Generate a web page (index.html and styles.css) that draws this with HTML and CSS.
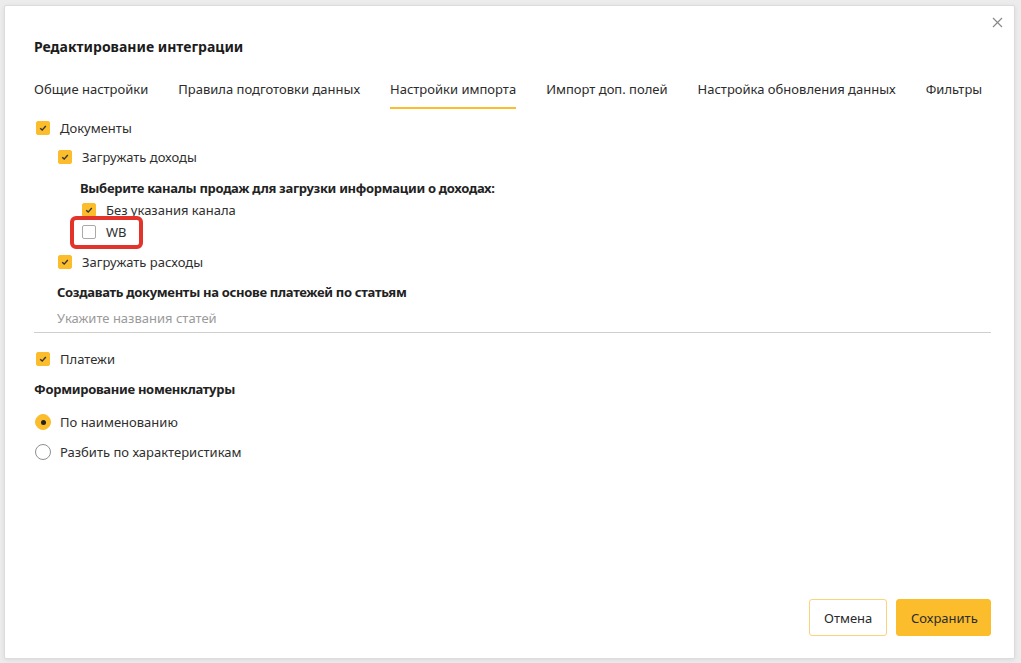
FILE: index.html
```html
<!DOCTYPE html>
<html lang="ru">
<head>
    <meta charset="UTF-8">
    <meta name="viewport" content="width=device-width, initial-scale=1.0">
    <title>Редактирование интеграции</title>
    <link rel="stylesheet" href="styles.css">
</head>
<body>
    <div class="modal">
        <button class="closeBtn" type="button" aria-label="Закрыть">
            <svg width="11" height="11" viewBox="0 0 11 11"><path d="M1 1L10 10M10 1L1 10" stroke="#8a8a8a" stroke-width="1.2" fill="none"/></svg>
        </button>

        <h1 class="title">Редактирование интеграции</h1>

        <ul class="tabs">
            <li>Общие настройки</li>
            <li>Правила подготовки данных</li>
            <li class="active">Настройки импорта</li>
            <li>Импорт доп. полей</li>
            <li>Настройка обновления данных</li>
            <li>Фильтры</li>
        </ul>

        <div class="content">
            <label class="opt lvl0 first"><span class="box on"></span>Документы</label>
            <label class="opt lvl1 gap7"><span class="box on"></span>Загружать доходы</label>

            <div class="caption lvl2 gap9">Выберите каналы продаж для загрузки информации о доходах:</div>
            <label class="opt lvl2b"><span class="box on"></span>Без указания канала</label>
            <label class="opt lvl2b"><span class="mark"><span class="box"></span>WB</span></label>

            <label class="opt lvl1 gap8"><span class="box on"></span>Загружать расходы</label>

            <div class="caption lvl1t gap8">Создавать документы на основе платежей по статьям</div>
            <div class="field lvl1t">Укажите названия статей</div>

            <label class="opt lvl0 gap15"><span class="box on"></span>Платежи</label>

            <div class="caption gap8">Формирование номенклатуры</div>
            <label class="opt radioRow gap11"><span class="radio on"></span>По наименованию</label>
            <label class="opt radioRow gap8"><span class="radio"></span>Разбить по характеристикам</label>
        </div>

        <div class="footer">
            <button class="btn btnCancel" type="button">Отмена</button>
            <button class="btn btnSave" type="button">Сохранить</button>
        </div>
    </div>
</body>
</html>
```

FILE: styles.css
```css
* {
    box-sizing: border-box;
}
body {
    margin: 0;
    padding: 5px 6px 4px 4px;
    height: 663px;
    overflow: hidden;
    background-color: #ececec;
    font-family: "Noto Sans", "Open Sans", sans-serif;
    font-size: 13px;
    color: #2f2f2f;
}
.modal {
    position: relative;
    height: 654px;
    display: flex;
    flex-direction: column;
    padding: 0 23px 22px 29px;
    background-color: #fff;
    border: 1px solid #dcdcdc;
    border-radius: 2px;
    box-shadow: 0 1px 4px rgba(0, 0, 0, .08);
}
.closeBtn {
    position: absolute;
    top: 11px;
    right: 11px;
    width: 11px;
    height: 11px;
    padding: 0;
    border: 0;
    background: none;
    cursor: pointer;
}
.closeBtn svg {
    display: block;
}
.title {
    margin: 31px 0 0;
    font-size: 14px;
    line-height: 20px;
    font-weight: 700;
    color: #1c1c1c;
}
.tabs {
    display: flex;
    gap: 30px;
    margin: 22px 0 0;
    padding: 0;
    list-style: none;
}
.tabs li {
    padding-bottom: 8px;
    line-height: 20px;
    border-bottom: 2px solid transparent;
    color: #2b2b2b;
    white-space: nowrap;
    cursor: pointer;
}
.tabs li.active {
    border-bottom-color: #fbbd2c;
}
.content {
    flex: 1;
}
.opt {
    display: flex;
    align-items: center;
    height: 22px;
    line-height: 22px;
}
.caption {
    line-height: 22px;
    font-weight: 700;
    letter-spacing: -0.3px;
    color: #222;
}
.first { margin-top: 8px; }
.gap7 { margin-top: 7px; }
.gap8 { margin-top: 8px; }
.gap9 { margin-top: 9px; }
.gap11 { margin-top: 11px; }
.gap15 { margin-top: 15px; }

.lvl0 { padding-left: 2px; }
.lvl1 { padding-left: 24px; }
.lvl1t { padding-left: 23px; }
.lvl2 { padding-left: 46px; }
.lvl2b { padding-left: 48px; }

.box {
    flex: none;
    width: 14px;
    height: 14px;
    margin-right: 10px;
    border: 1px solid #a9a9a9;
    border-radius: 2px;
    background-color: #fff;
}
.box.on {
    border-color: #fbbd2c;
    background: #fbbd2c url("data:image/svg+xml;utf8,<svg xmlns='http://www.w3.org/2000/svg' width='14' height='14' viewBox='0 0 14 14'><path d='M4.2 7.2L6.2 9.1L9.8 5' stroke='%23333' stroke-width='1.4' fill='none'/></svg>") center / 14px 14px no-repeat;
}
.mark {
    position: relative;
    display: flex;
    align-items: center;
}
.mark::after {
    content: "";
    position: absolute;
    top: -5px;
    bottom: -6px;
    left: -12px;
    right: -16px;
    border: 4px solid #e3342b;
    border-radius: 6px;
}
.field {
    height: 26px;
    margin-top: 4px;
    line-height: 22px;
    border-bottom: 1px solid #cfcfcf;
    color: #9a9a9a;
}
.radioRow {
    padding-left: 1px;
}
.radio {
    flex: none;
    position: relative;
    width: 16px;
    height: 16px;
    margin-right: 9px;
    border: 1px solid #8f8f8f;
    border-radius: 50%;
}
.radio.on {
    border-color: #fbbd2c;
    background-color: #fbbd2c;
}
.radio.on::after {
    content: "";
    position: absolute;
    top: 4.5px;
    left: 4.5px;
    width: 5px;
    height: 5px;
    border-radius: 50%;
    background-color: #222;
}
.footer {
    display: flex;
    justify-content: flex-end;
    gap: 9px;
}
.btn {
    height: 37px;
    padding: 0 14px;
    font-family: inherit;
    font-size: 13px;
    color: #2b2b2b;
    border-radius: 3px;
    cursor: pointer;
}
.btnCancel {
    width: 78px;
    background-color: #fff;
    border: 1px solid #fcd27a;
}
.btnSave {
    width: 95px;
    background-color: #fbbd2c;
    border: 1px solid #fbbd2c;
}
```
